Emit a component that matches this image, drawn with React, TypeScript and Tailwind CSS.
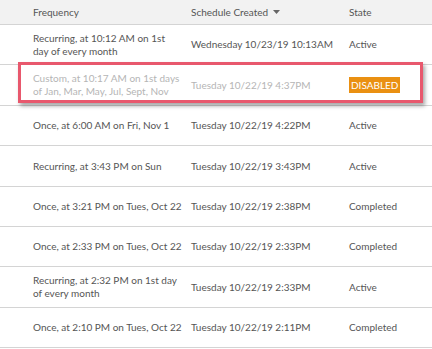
import React from 'react';

type Row = {
  freq: string[];
  created: string;
  state: string;
  h: string;
  disabled?: boolean;
};

const ROWS: Row[] = [
  { freq: ['Recurring, at 10:12 AM on 1st', 'day of every month'], created: 'Wednesday 10/23/19 10:13AM', state: 'Active', h: 'h-[40px]' },
  { freq: ['Custom, at 10:17 AM on 1st days', 'of Jan, Mar, May, Jul, Sept, Nov'], created: 'Tuesday 10/22/19 4:37PM', state: 'DISABLED', h: 'h-[41px]', disabled: true },
  { freq: ['Once, at 6:00 AM on Fri, Nov 1'], created: 'Tuesday 10/22/19 4:22PM', state: 'Active', h: 'h-[40px]' },
  { freq: ['Recurring, at 3:43 PM on Sun'], created: 'Tuesday 10/22/19 3:43PM', state: 'Active', h: 'h-[41px]' },
  { freq: ['Once, at 3:21 PM on Tues, Oct 22'], created: 'Tuesday 10/22/19 2:38PM', state: 'Completed', h: 'h-[40px]' },
  { freq: ['Once, at 2:33 PM on Tues, Oct 22'], created: 'Tuesday 10/22/19 2:33PM', state: 'Completed', h: 'h-[40px]' },
  { freq: ['Recurring, at 2:32 PM on 1st day', 'of every month'], created: 'Tuesday 10/22/19 2:33PM', state: 'Active', h: 'h-[41px]' },
  { freq: ['Once, at 2:10 PM on Tues, Oct 22'], created: 'Tuesday 10/22/19 2:11PM', state: 'Completed', h: 'h-[40px]' },
];

export default function App() {
  return (
    <div className="relative w-[432px] h-[349px] bg-white overflow-hidden font-['Lato',sans-serif] text-[10px] text-[#555]">
      {/* HEADER */}
      <div className="flex items-center h-[25px] bg-[#f2f2f2] border-b border-[#d4d4d4] pl-[33px] text-[#555]">
        <div className="w-[158px]">Frequency</div>
        <div className="w-[158px] flex items-center gap-[5px]">
          Schedule Created
          <svg width="7" height="4" viewBox="0 0 7 4"><path d="M0 0h7L3.5 4z" fill="#666" /></svg>
        </div>
        <div>State</div>
      </div>

      {/* ROWS */}
      {ROWS.map((r, i) => (
        <div
          key={i}
          className={`flex items-center ${r.h} border-b border-[#d4d4d4] pl-[33px] ${r.disabled ? 'text-[#b5b5b5]' : ''}`}
        >
          <div className="w-[158px] leading-[13px] whitespace-nowrap">
            {r.freq.map((l, j) => <div key={j}>{l}</div>)}
          </div>
          <div className="w-[158px] whitespace-nowrap">{r.created}</div>
          <div>
            {r.disabled ? (
              <span className="inline-block bg-[#ea9012] text-white px-[2px] leading-[16px]">{r.state}</span>
            ) : (
              r.state
            )}
          </div>
        </div>
      ))}

      {/* highlight box */}
      <div className="absolute left-[18px] top-[62px] w-[405px] h-[41px] border-[3px] border-[#e8586d] shadow-[2px_3px_4px_rgba(0,0,0,0.35)] pointer-events-none" />
    </div>
  );
}
